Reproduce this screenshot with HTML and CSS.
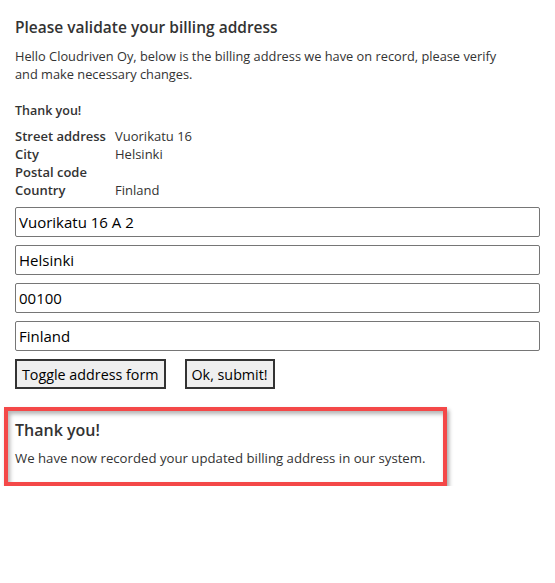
FILE: index.html
```html
<!DOCTYPE html>
<html>
<head>
<meta charset="utf-8">
<link rel="stylesheet" href="styles.css">
</head>
<body>
<div class="page">
  <h2 class="title">Please validate your billing address</h2>
  <p class="intro">Hello Cloudriven Oy, below is the billing address we have on record, please verify and make necessary changes.</p>
  <p class="thanks-small">Thank you!</p>
  <div class="record">
    <div class="label">Street address</div><div class="value">Vuorikatu 16</div>
    <div class="label">City</div><div class="value">Helsinki</div>
    <div class="label">Postal code</div><div class="value"></div>
    <div class="label">Country</div><div class="value">Finland</div>
  </div>
  <form class="form">
    <input class="field" type="text" value="Vuorikatu 16 A 2">
    <input class="field" type="text" value="Helsinki">
    <input class="field" type="text" value="00100">
    <input class="field" type="text" value="Finland">
    <div class="buttons">
      <button type="button" class="btn">Toggle address form</button>
      <button type="button" class="btn">Ok, submit!</button>
    </div>
  </form>
  <div class="notice">
    <h3 class="notice-title">Thank you!</h3>
    <p class="notice-text">We have now recorded your updated billing address in our system.</p>
  </div>
</div>
</body>
</html>
```

FILE: styles.css
```css
html, body {
  margin: 0;
  padding: 0;
  background: #ffffff;
}
body {
  font-family: "Open Sans", "Noto Sans", sans-serif;
  color: #333333;
}
.page {
  padding: 15px 15px 0 15px;
  width: 525px;
}
.title {
  margin: 0;
  font-size: 15.5px;
  font-weight: 600;
  line-height: 24px;
  color: #333333;
}
.intro {
  margin: 8px 0 0 0;
  max-width: 485px;
  font-size: 12.8px;
  line-height: 18px;
}
.thanks-small {
  margin: 19px 0 0 0;
  font-size: 12.5px;
  font-weight: 600;
  line-height: 18px;
}
.record {
  margin-top: 7px;
  display: grid;
  grid-template-columns: 100px 1fr;
  font-size: 13px;
  line-height: 18px;
}
.label {
  font-weight: 600;
}
.form {
  margin-top: 8px;
  display: flex;
  flex-direction: column;
  gap: 8px;
}
.field {
  box-sizing: border-box;
  width: 525px;
  height: 30px;
  margin: 0;
  padding: 0 3px;
  border: 1px solid #767676;
  border-radius: 2px;
  font-family: "Open Sans", "Noto Sans", sans-serif;
  font-size: 15px;
  color: #000000;
  background: #fff;
}
.buttons {
  display: flex;
  gap: 19px;
}
.btn {
  box-sizing: border-box;
  height: 30px;
  margin: 0;
  padding: 0 5px;
  border: 2px solid #333333;
  background: #efefef;
  font-family: "Open Sans", "Noto Sans", sans-serif;
  font-size: 14.3px;
  color: #000;
}
.notice {
  margin: 18px 0 0 -11px;
  width: 428px;
  padding: 8px 0 15px 7px;
  border: 4px solid #f44848;
  box-shadow: 2px 3px 4px rgba(0,0,0,0.35), inset 2px 3px 4px rgba(0,0,0,0.3);
}
.notice-title {
  margin: 0;
  font-size: 16px;
  font-weight: 600;
  line-height: 22px;
}
.notice-text {
  margin: 8px 0 0 0;
  font-size: 13.2px;
  line-height: 18px;
}
```
